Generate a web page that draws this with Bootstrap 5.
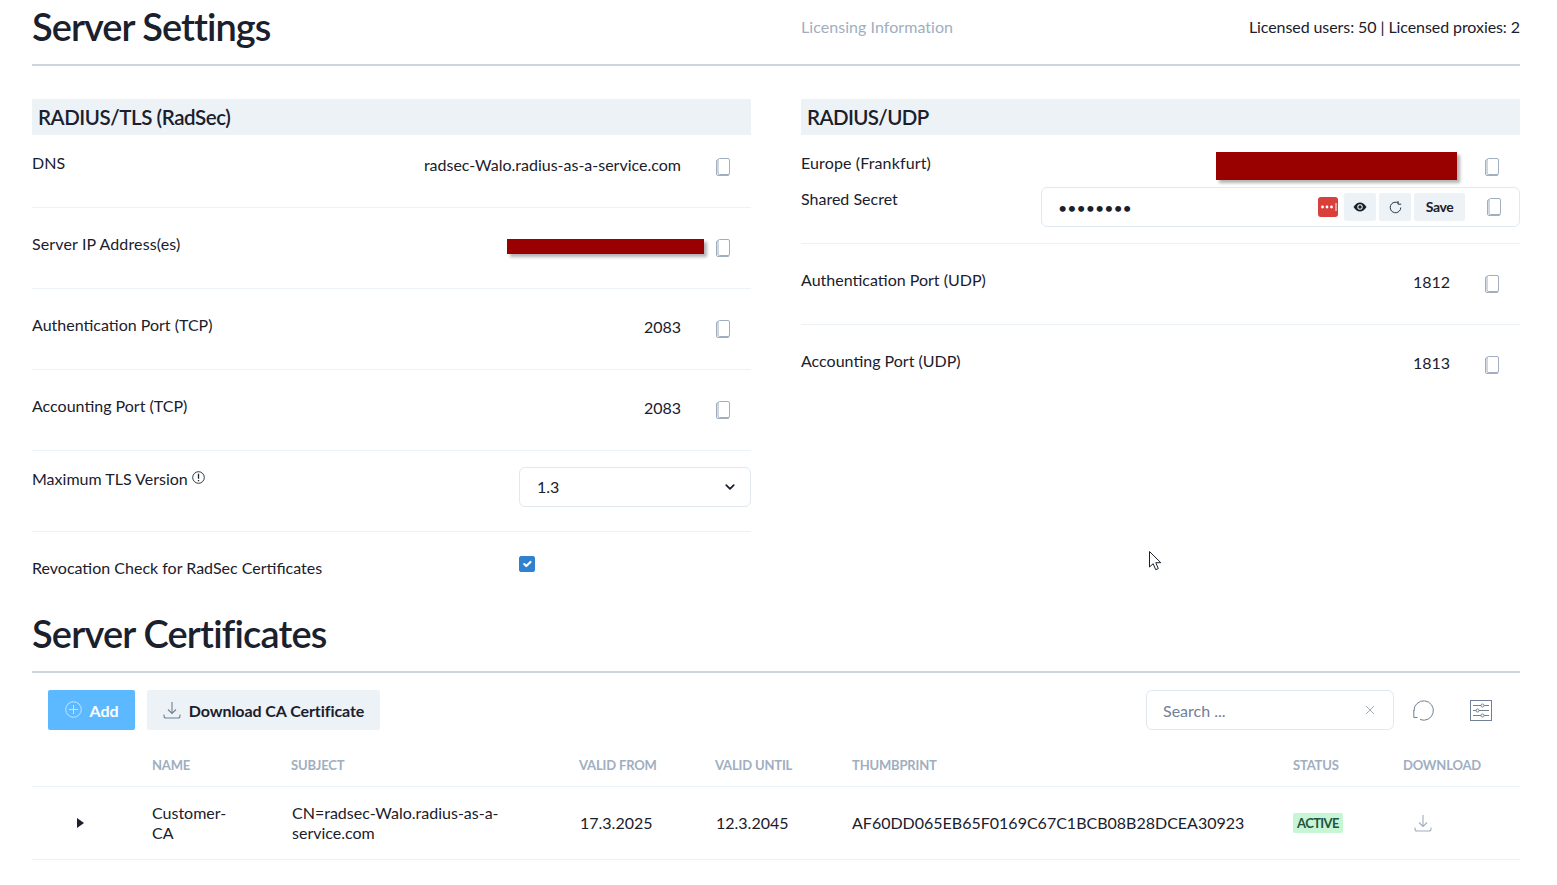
<!DOCTYPE html>
<html lang="en">
<head>
    <meta charset="UTF-8">
    <meta name="viewport" content="width=device-width, initial-scale=1.0">
    <title>Server Settings</title>
    <link href="https://cdn.jsdelivr.net/npm/bootstrap@5.3.0/dist/css/bootstrap.min.css" rel="stylesheet">
    <style>
        body {
            font-family: "Lato", "Liberation Sans", sans-serif;
            font-size: 16px;
            color: #1a202c;
            background: #fff;
            overflow: hidden;
        }
        .page-wrap { padding: 0 37px 0 32px; }
        .page-head {
            height: 66px;
            padding-bottom: 11px;
            border-bottom: 2px solid #cbd5e0;
        }
        .page-head h1, .certs-head h1 {
            font-size: 38px;
            font-weight: 600;
            letter-spacing: -0.95px;
            line-height: 1;
            margin: -2px 0 0;
        }
        .certs-head h1 { letter-spacing: -0.8px; margin-top: -1px; }
        .licence-col { flex: 0 0 719px; }
        .licence-side { padding-left: 50px; }
        .licence-note { color: #a0aec0; letter-spacing: .05px; }
        .licence-count { letter-spacing: -.08px; }
        .track-wide { letter-spacing: .13px; }
        .settings-grid { display: grid; grid-template-columns: 719px 719px; gap: 50px; margin-top: 33px; height: 487px; }
        .section-title {
            background: #edf2f7;
            height: 36px;
            line-height: 37px;
            padding-left: 6px;
            font-size: 20.5px;
            font-weight: 600;
            letter-spacing: -0.6px;
            margin: 0;
        }
        .section-title.tls-title { letter-spacing: -0.44px; }
        .cfg-row {
            height: 81px;
            padding-top: 26px;
            border-bottom: 1px solid #edf2f7;
            display: flex;
            line-height: 20px;
        }
        .cfg-row.first { height: 73px; padding-top: 18px; }
        .cfg-row.plain { border-bottom: 0; }
        .cfg-row.tls-row { padding-top: 16px; }
        .tls-label { padding-top: 2px; }
        .cfg-value { margin-left: auto; padding-top: 2px; }
        .copy-btn { width: 14px; height: 18px; margin: 5px 21px 0 35px; flex: none; color: #a0aec0; }
        .copy-btn.after-redact { margin-left: 12px; }
        .copy-btn.after-europe { margin-left: 28px; }
        .redact {
            background: #990000;
            box-shadow: 3px 3px 3px rgba(0, 0, 0, .3);
            margin-left: auto;
        }
        .redact-ip { width: 197px; height: 15px; margin-top: 5px; }
        .redact-eu { width: 241px; height: 28px; margin-top: -1px; }
        .tls-select {
            width: 232px;
            height: 40px;
            margin-left: auto;
            font-size: 16px;
            color: #1a202c;
            border-color: #e2e8f0;
            border-radius: 6px;
            padding-left: 17px;
            background-image: url("data:image/svg+xml,%3csvg xmlns='http://www.w3.org/2000/svg' viewBox='0 0 16 16'%3e%3cpath fill='none' stroke='%231a202c' stroke-linecap='round' stroke-linejoin='round' stroke-width='2.800' d='m2 5 6 6 6-6'/%3e%3c/svg%3e");
            background-position: right 14px center;
            background-size: 12px 10px;
        }
        .info-mark { width: 13px; height: 13px; color: #1a202c; vertical-align: 1px; }
        .form-check-input.revocation-check {
            display: block;
            width: 16px;
            height: 16px;
            margin: 0;
            border-radius: 2px;
            background-color: #3182ce;
            border-color: #3182ce;
        }
        .check-slot { width: 232px; margin-left: auto; margin-top: -2px; }
        .secret-row { height: 109px; border-bottom: 1px solid #edf2f7; }
        .europe-line { display: flex; height: 52px; padding-top: 18px; line-height: 20px; }
        .secret-line { display: flex; align-items: flex-start; line-height: 20px; }
        .secret-label { padding-top: 2px; }
        .secret-box {
            width: 479px;
            height: 40px;
            margin-left: auto;
            border: 1px solid #e2e8f0;
            border-radius: 6px;
            display: flex;
            align-items: center;
            padding-left: 16px;
        }
        .secret-input {
            border: 0;
            outline: 0;
            flex: 1;
            min-width: 0;
            font-size: 16px;
            color: #1a202c;
            padding: 2px 0 0;
            letter-spacing: -0.05px;
        }
        .lastpass { width: 20px; height: 20px; margin-right: 6px; flex: none; }
        .tool-btn {
            background: #edf2f7;
            border: 0;
            border-radius: 2px;
            height: 28px;
            padding: 0;
            font-size: 14px;
            font-weight: 700;
            letter-spacing: -0.4px;
            color: #1a202c;
            display: flex;
            align-items: center;
            justify-content: center;
        }
        .tool-icon { width: 32px; margin-right: 3px; }
        .tool-save { width: 51px; }
        .secret-copy { width: 14px; height: 18px; margin: 0 18px 0 22px; color: #a0aec0; flex: none; }
        .certs-head { height: 87px; border-bottom: 2px solid #cbd5e0; padding-top: 29px; }
        .cert-toolbar { padding: 17px 0 0 16px; height: 57px; display: flex; }
        .btn-add, .btn-ca {
            height: 40px;
            border: 0;
            border-radius: 2px;
            font-weight: 700;
            font-size: 16px;
            letter-spacing: -0.07px;
            display: flex;
            align-items: center;
            padding: 1px 0 0;
        }
        .btn-add { background: #5cb8ff; color: #fff; width: 87px; justify-content: center; gap: 8px; margin-right: 12px; }
        .btn-ca { background: #edf2f7; color: #1a202c; width: 233px; justify-content: center; gap: 8px; }
        .btn-add:hover { background: #5cb8ff; color: #fff; }
        .btn-ca:hover { background: #edf2f7; color: #1a202c; }
        .btn-add svg, .btn-ca svg { margin-top: -2px; }
        .cert-search {
            width: 248px;
            height: 40px;
            margin-left: auto;
            border: 1px solid #e2e8f0;
            border-radius: 6px;
            display: flex;
            align-items: center;
            padding: 0 18px 0 16px;
            color: #718096;
        }
        .cert-search input {
            border: 0;
            outline: 0;
            flex: 1;
            min-width: 0;
            padding: 2px 0 0;
            font-size: 16px;
            color: #1a202c;
        }
        .cert-search input::placeholder { color: #718096; opacity: 1; }
        .clear-x { width: 10px; height: 10px; color: #a0aec0; }
        .toolbar-icons { display: flex; align-items: center; color: #718096; padding: 0 28px 0 19px; gap: 36px; }
        .cert-table { table-layout: fixed; width: 1488px; margin: 0; color: #1a202c; }
        .cert-table th {
            color: #a0aec0;
            font-size: 13px;
            font-weight: 700;
            text-transform: uppercase;
            letter-spacing: -0.17px;
            padding: 16px 12px 0;
            height: 56px;
            vertical-align: middle;
            border-bottom: 1px solid #edf2f7;
        }
        .cert-table td {
            padding: 0 12px;
            height: 73px;
            line-height: 20px;
            vertical-align: middle;
            font-size: 16px;
            border-bottom: 1px solid #edf2f7;
        }
        .cert-table td.cert-name { padding-right: 45px; }
        .cert-table td.cert-shift { padding-left: 13px; }
        .status-pill {
            display: inline-block;
            background: #c6f6d5;
            color: #22543d;
            border-radius: 2px;
            font-size: 13px;
            font-weight: 700;
            line-height: 20px;
            letter-spacing: -0.6px;
            padding: 0 4px;
        }
        .row-toggle { margin-left: 45px; display: block; }
        .cert-download { color: #a0aec0; margin-left: 11px; display: block; }
        .mouse-pointer { position: absolute; left: 1149px; top: 551px; width: 13px; height: 20px; }
    </style>
</head>
<body>
    <svg width="0" height="0" class="position-absolute">
        <defs>
            <symbol id="ic-copy" viewBox="0 0 14 18">
                <rect x="2" y=".5" width="11.500" height="16" rx="1.500" fill="none" stroke="currentColor"/>
                <path d="M2 1.800H1.700A1.200 1.200 0 0 0 .5 3v13a1.500 1.500 0 0 0 1.500 1.500h10a1.200 1.200 0 0 0 1.200-1" fill="none" stroke="currentColor"/>
            </symbol>
            <symbol id="ic-download" viewBox="0 0 18 18">
                <path d="M9 1v11M5 8.500 9 12.500l4-4M1 13.500V15a2 2 0 0 0 2 2h12a2 2 0 0 0 2-2v-1.500" fill="none" stroke="currentColor" stroke-width="1.100"/>
            </symbol>
        </defs>
    </svg>

    <div class="page-wrap">
        <div class="page-head d-flex align-items-center">
            <div class="licence-col"><h1>Server Settings</h1></div>
            <div class="licence-side flex-grow-1 d-flex justify-content-between">
                <span class="licence-note text-nowrap">Licensing Information</span>
                <span class="licence-count text-nowrap">Licensed users: 50 | Licensed proxies: 2</span>
            </div>
        </div>

        <div class="settings-grid">
            <section>
                <h2 class="section-title tls-title">RADIUS/TLS (RadSec)</h2>
                <div class="cfg-row first">
                    <span>DNS</span>
                    <span class="cfg-value">radsec-Walo.radius-as-a-service.com</span>
                    <svg class="copy-btn"><use href="#ic-copy"/></svg>
                </div>
                <div class="cfg-row">
                    <span class="track-wide">Server IP Address(es)</span>
                    <div class="redact redact-ip"></div>
                    <svg class="copy-btn after-redact"><use href="#ic-copy"/></svg>
                </div>
                <div class="cfg-row">
                    <span>Authentication Port (TCP)</span>
                    <span class="cfg-value">2083</span>
                    <svg class="copy-btn"><use href="#ic-copy"/></svg>
                </div>
                <div class="cfg-row">
                    <span>Accounting Port (TCP)</span>
                    <span class="cfg-value">2083</span>
                    <svg class="copy-btn"><use href="#ic-copy"/></svg>
                </div>
                <div class="cfg-row tls-row">
                    <span class="tls-label">Maximum TLS Version
                        <svg class="info-mark" viewBox="0 0 13 13"><circle cx="6.500" cy="6.500" r="5.800" fill="none" stroke="currentColor" stroke-width=".9"/><path d="M6.500 2.800v5M6.500 9v1.200" stroke="currentColor" stroke-width="1.300"/></svg>
                    </span>
                    <select class="form-select tls-select"><option>1.3</option></select>
                </div>
                <div class="cfg-row plain">
                    <span>Revocation Check for RadSec Certificates</span>
                    <div class="check-slot"><input class="form-check-input revocation-check" type="checkbox" checked></div>
                </div>
            </section>

            <section>
                <h2 class="section-title">RADIUS/UDP</h2>
                <div class="secret-row">
                    <div class="europe-line">
                        <span class="track-wide">Europe (Frankfurt)</span>
                        <div class="redact redact-eu"></div>
                        <svg class="copy-btn after-europe"><use href="#ic-copy"/></svg>
                    </div>
                    <div class="secret-line">
                        <span class="secret-label">Shared Secret</span>
                        <div class="secret-box">
                            <input class="secret-input" type="password" value="password">
                            <svg class="lastpass" viewBox="0 0 20 20">
                                <rect width="20" height="20" rx="3" fill="#d9403b"/>
                                <circle cx="4.500" cy="10" r="1.400" fill="#fff"/>
                                <circle cx="9" cy="10" r="1.400" fill="#fff"/>
                                <circle cx="13.500" cy="10" r="1.400" fill="#fff"/>
                                <rect x="17.500" y="6" width="1" height="8" fill="#fff"/>
                            </svg>
                            <button class="tool-btn tool-icon" type="button">
                                <svg width="14" height="10" viewBox="0 0 14 10"><path d="M.5 5C2.500 1.800 4.800.500 7 .500S11.500 1.800 13.500 5C11.500 8.200 9.200 9.500 7 9.500S2.500 8.200.5 5z" fill="#1a202c"/><circle cx="7" cy="5" r="2.700" fill="#edf2f7"/><circle cx="7" cy="5" r="1.700" fill="#1a202c"/></svg>
                            </button>
                            <button class="tool-btn tool-icon" type="button">
                                <svg width="13" height="13" viewBox="0 0 13 13"><path d="M11.800 6.500A5.300 5.300 0 1 1 9.500 2.100" fill="none" stroke="#2d3748" stroke-width="1"/><path d="M9 0v3.200h3.200" fill="none" stroke="#2d3748" stroke-width="1"/></svg>
                            </button>
                            <button class="tool-btn tool-save" type="button">Save</button>
                            <svg class="secret-copy"><use href="#ic-copy"/></svg>
                        </div>
                    </div>
                </div>
                <div class="cfg-row">
                    <span>Authentication Port (UDP)</span>
                    <span class="cfg-value">1812</span>
                    <svg class="copy-btn"><use href="#ic-copy"/></svg>
                </div>
                <div class="cfg-row plain">
                    <span>Accounting Port (UDP)</span>
                    <span class="cfg-value">1813</span>
                    <svg class="copy-btn"><use href="#ic-copy"/></svg>
                </div>
            </section>
        </div>

        <div class="certs-head"><h1>Server Certificates</h1></div>

        <div class="cert-toolbar">
            <button class="btn btn-add" type="button">
                <svg width="17" height="17" viewBox="0 0 17 17"><circle cx="8.500" cy="8.500" r="7.800" fill="none" stroke="#c5e5ff" stroke-width="1"/><path d="M8.500 4v9M4 8.500h9" stroke="#c5e5ff" stroke-width="1"/></svg>
                Add
            </button>
            <button class="btn btn-ca" type="button">
                <svg width="18" height="18" style="color:#718096"><use href="#ic-download"/></svg>
                Download CA Certificate
            </button>
            <div class="cert-search">
                <input type="text" placeholder="Search ...">
                <svg class="clear-x" viewBox="0 0 10 10"><path d="M1 1l8 8M9 1l-8 8" stroke="currentColor" stroke-width="1"/></svg>
            </div>
            <div class="toolbar-icons">
                <svg width="21" height="21" viewBox="0 0 21 21" fill="none" stroke="currentColor" stroke-width="1"><path d="M7 19.500A9.700 9.700 0 1 0 1 11"/><path d="M.8 10V17.500H4.500"/></svg>
                <svg width="22" height="21" viewBox="0 0 22 21" fill="none" stroke="currentColor" stroke-width="1"><rect x=".5" y=".5" width="21" height="20"/><path d="M3 5.500h8M14 5.500h5M3 10.500h3M9 10.500h10M3 15.500h8M14 15.500h5"/><circle cx="12.500" cy="5.500" r="1.500"/><circle cx="7.500" cy="10.500" r="1.500"/><circle cx="12.500" cy="15.500" r="1.500"/></svg>
            </div>
        </div>

        <table class="table cert-table">
            <colgroup>
                <col style="width:108px"><col style="width:139px"><col style="width:288px"><col style="width:136px">
                <col style="width:137px"><col style="width:441px"><col style="width:110px"><col style="width:129px">
            </colgroup>
            <thead>
                <tr>
                    <th></th><th>Name</th><th>Subject</th><th>Valid From</th><th>Valid Until</th><th>Thumbprint</th><th>Status</th><th>Download</th>
                </tr>
            </thead>
            <tbody>
                <tr>
                    <td class="p-0"><svg class="row-toggle" width="7" height="10" viewBox="0 0 7 10"><path d="M0 0l7 5-7 5z" fill="#1a202c"/></svg></td>
                    <td class="cert-name">Customer-CA</td>
                    <td class="cert-shift">CN=radsec-Walo.radius-as-a-service.com</td>
                    <td class="cert-shift">17.3.2025</td>
                    <td class="cert-shift">12.3.2045</td>
                    <td>AF60DD065EB65F0169C67C1BCB08B28DCEA30923</td>
                    <td><span class="status-pill">ACTIVE</span></td>
                    <td><svg class="cert-download" width="18" height="18"><use href="#ic-download"/></svg></td>
                </tr>
            </tbody>
        </table>
    </div>

    <svg class="mouse-pointer" viewBox="0 0 13 20"><path d="M.5.500v15.500l3.700-3.300 2.500 6 2.600-1.100-2.500-5.900h5z" fill="#fff" stroke="#1a202c" stroke-width="1"/></svg>

    <script src="https://cdn.jsdelivr.net/npm/bootstrap@5.3.0/dist/js/bootstrap.bundle.min.js"></script>
</body>
</html>
